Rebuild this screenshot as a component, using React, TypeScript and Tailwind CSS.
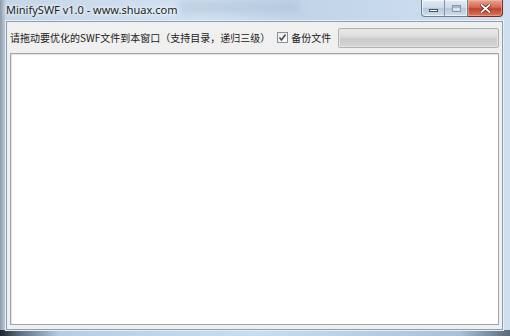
export default function App() {
  return (
    <div
      className="relative w-[510px] h-[336px] overflow-hidden flex flex-col bg-[linear-gradient(90deg,#8e9aa6_0px,#c4d6e8_6px,#d3e2f1_40%,#c2d5e9_60%,#cfdfef_100%)]"
      style={{ fontFamily: '"Noto Sans", "Noto Sans CJK SC", sans-serif' }}
    >
      {/* glass streaks */}
      <div className="absolute left-[180px] top-0 w-[120px] h-[14px] bg-[#9fb6cf] opacity-40 blur-[4px]" />
      <div className="absolute left-0 bottom-0 w-[510px] h-[6px] bg-[linear-gradient(90deg,#1d2530_0px,#5e7080_20px,#b6cde4_60px,#c9ddef_50%,#a9c1d9_90%,#5c6b79_100%)]" />

      {/* title bar */}
      <div className="relative h-[21px] flex items-start shrink-0">
        <span className="pl-[6px] pt-[3px] text-[11px] leading-[14px] text-[#1b1f24] [text-shadow:0_0_6px_#ffffff,0_0_3px_#ffffff]">
          MinifySWF v1.0 - www.shuax.com
        </span>
        <div className="ml-auto mr-[7px] flex h-[17px]">
          <div className="flex rounded-bl-[4px] border border-t-0 border-[#6f7f91] bg-[linear-gradient(180deg,#e3ecf5,#c9d8e8_50%,#b5c8dc_51%,#cfdeec)] shadow-[inset_0_0_0_1px_rgba(255,255,255,0.6)]">
            <div className="w-[23px] flex items-center justify-center border-r border-[#8797a8]">
              <div className="mt-[4px] w-[9px] h-[3px] bg-white border border-[#45505c]" />
            </div>
            <div className="w-[22px] flex items-center justify-center">
              <div className="w-[9px] h-[7px] border border-[#8a97a5] bg-[#d9e3ee] shadow-[inset_0_2px_0_#a9b6c4]" />
            </div>
          </div>
          <div className="w-[35px] flex items-center justify-center rounded-br-[4px] border border-l-0 border-t-0 border-[#7c2a20] bg-[linear-gradient(180deg,#e8a493,#d46a55_45%,#c2412b_55%,#d8765f)] shadow-[inset_0_0_0_1px_rgba(255,190,170,0.5)]">
            <svg width="11" height="9" viewBox="0 0 11 9">
              <path d="M1.5 1 L9.5 8 M9.5 1 L1.5 8" stroke="#5a1a12" strokeWidth="3.2" strokeLinecap="square" />
              <path d="M1.5 1 L9.5 8 M9.5 1 L1.5 8" stroke="#ffffff" strokeWidth="1.8" strokeLinecap="square" />
            </svg>
          </div>
        </div>
      </div>

      {/* client area */}
      <div className="relative ml-[6px] mr-[7px] mb-[6px] flex-1 flex flex-col bg-[#f0f0f0] border border-[#8d9eb0] shadow-[0_0_0_1px_#e6eef6]">
        <div className="h-[31px] flex items-center shrink-0">
          <span
            className="pl-[3px] text-[10px] leading-[12px] text-[#1a1a1a] whitespace-nowrap"
            style={{ fontFamily: '"Noto Sans CJK SC", "Noto Sans", sans-serif' }}
          >
            请拖动要优化的SWF文件到本窗口（支持目录，递归三级）
          </span>
          <div className="ml-[7px] w-[11px] h-[11px] border border-[#8e8f8f] bg-[linear-gradient(135deg,#e8eaec,#ffffff)] flex items-center justify-center">
            <svg width="9" height="9" viewBox="0 0 9 9">
              <path d="M1.5 4.5 L3.5 7 L7.5 1.5" fill="none" stroke="#3b4a5e" strokeWidth="1.5" />
            </svg>
          </div>
          <span
            className="ml-[3px] text-[10px] leading-[12px] text-[#1a1a1a] whitespace-nowrap"
            style={{ fontFamily: '"Noto Sans CJK SC", "Noto Sans", sans-serif' }}
          >
            备份文件
          </span>
          <div className="ml-[7px] w-[161px] h-[20px] rounded-[2px] border border-[#b2b2b2] bg-[linear-gradient(180deg,#ececec,#dadada_45%,#cacaca_55%,#d6d6d6)] shadow-[inset_0_0_0_1px_#e4e4e4]" />
        </div>
        <div className="mx-[3px] mb-[4px] flex-1 bg-white border border-[#a5a5a5] shadow-[inset_1px_1px_0_#e3e3e3]" />
      </div>
    </div>
  );
}
